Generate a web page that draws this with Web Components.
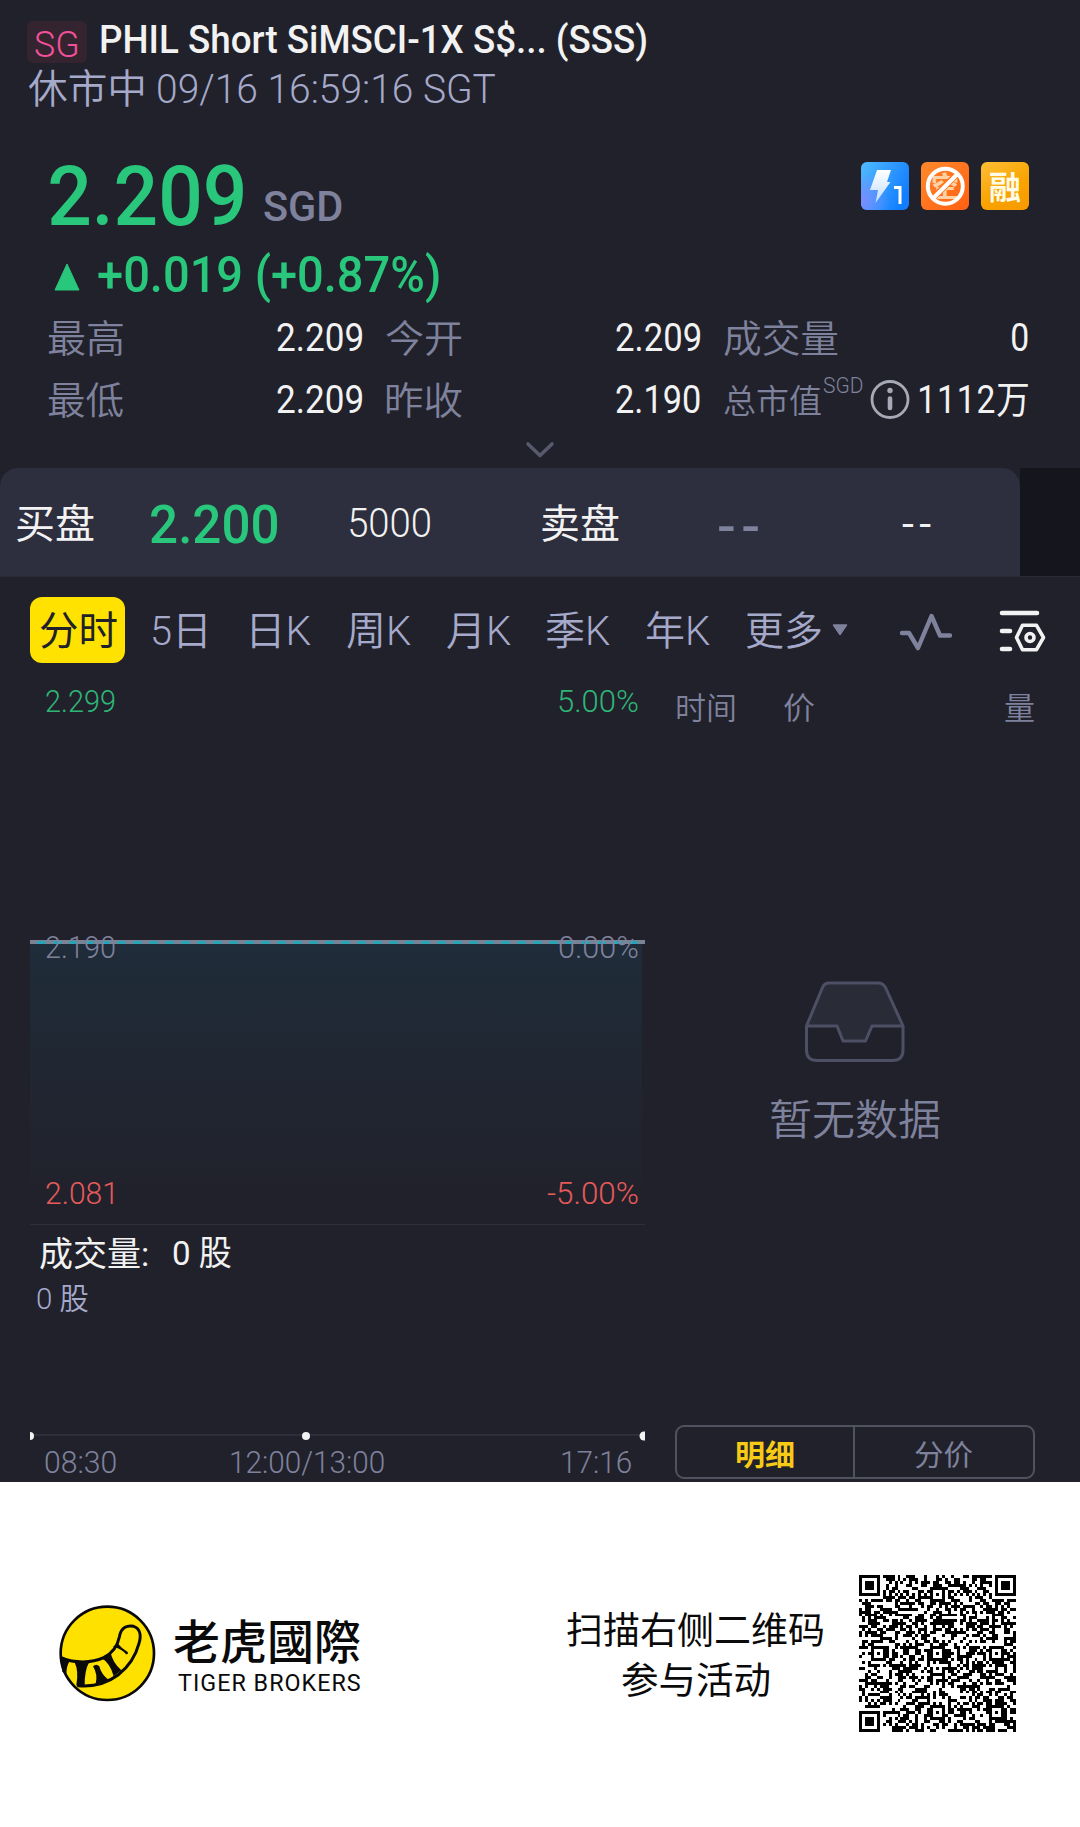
<!DOCTYPE html>
<html lang="zh-CN">
<head>
<meta charset="UTF-8">
<title>PHIL Short SiMSCI-1X S$ (SSS)</title>
<style>
  body {
    margin: 0;
    width: 1080px;
    height: 1827px;
    overflow: hidden;
    background: #21212b;
    color: #f2f2f2;
    font-family: Roboto, "Noto Sans CJK SC", sans-serif;
  }

  .market {
    display: flex;
    height: 806px;
  }
</style>
</head>
<body>
<quote-header></quote-header>
<price-board></price-board>
<order-book></order-book>
<chart-tabs></chart-tabs>
<div class="market">
  <minute-chart></minute-chart>
  <trade-list></trade-list>
</div>
<brand-footer></brand-footer>

<script>
const measure = document.createElement('canvas').getContext('2d');

// One line of text, condensed or widened so that its ink is exactly w pixels wide
class FitText extends HTMLElement {

  constructor() {
    super();
    this.shadowDOM = this.attachShadow({mode: 'open'});
  }

  connectedCallback() {
    this.render();
  }

  render() {
    const width = Number(this.getAttribute('w'));
    const size = this.getAttribute('size') || 38;
    const weight = this.getAttribute('weight') || 400;
    const gap = this.getAttribute('gap') || 0;
    const track = this.getAttribute('track') || 0;
    const dy = Number(this.getAttribute('dy') || 0) + 1.5;
    const color = this.getAttribute('color') || 'inherit';

    measure.font = `${weight} ${size}px Roboto, "Noto Sans CJK SC", sans-serif`;
    measure.letterSpacing = `${track}px`;
    const box = measure.measureText(this.textContent);
    const scale = width / (box.actualBoundingBoxLeft + box.actualBoundingBoxRight);
    const shift = box.actualBoundingBoxLeft * scale;

    this.shadowDOM.innerHTML = `
      <style>
      :host {
        display: block;
        flex: none;
        width: ${width}px;
        margin-left: ${gap}px;
        font-size: ${size}px;
        font-weight: ${weight};
        letter-spacing: ${track}px;
        line-height: 1.2;
        color: ${color};
        white-space: nowrap;
      }

      span {
        display: block;
        width: max-content;
        transform-origin: 0 50%;
        transform: translate(${shift}px, ${dy}px) scaleX(${scale});
      }
      </style>
      <span><slot></slot></span>
    `;
  }
}

class QuoteHeader extends HTMLElement {

  constructor() {
    super();
    this.shadowDOM = this.attachShadow({mode: 'open'});
  }

  connectedCallback() {
    this.shadowDOM.innerHTML = `
      <style>
      :host {
        display: block;
        height: 119px;
        padding: 21px 27px 0;
      }

      .name {
        display: flex;
        align-items: center;
        height: 42px;
      }

      .market {
        display: flex;
        align-items: center;
        box-sizing: border-box;
        width: 60px;
        height: 42px;
        padding: 4px 0 0 8px;
        border-radius: 6px;
        background: #33242f;
      }

      .title {
        margin-top: -6px;
      }

      .status {
        display: flex;
        align-items: center;
        height: 50px;
      }
      </style>
      <div class="name">
        <div class="market"><fit-text w="42" size="36" weight="300" color="#f2509a">SG</fit-text></div>
        <div class="title"><fit-text w="545" size="38" weight="500" gap="14">PHIL Short SiMSCI-1X S$... (SSS)</fit-text></div>
      </div>
      <div class="status">
        <fit-text w="115" size="40" weight="350" gap="1" color="#a5a9ca">休市中</fit-text>
        <fit-text w="337" size="40" weight="300" gap="15" color="#a5a9ca">09/16 16:59:16 SGT</fit-text>
      </div>
    `;
  }
}

class PriceBoard extends HTMLElement {

  constructor() {
    super();
    this.shadowDOM = this.attachShadow({mode: 'open'});
  }

  connectedCallback() {
    this.shadowDOM.innerHTML = `
      <style>
      :host {
        display: block;
        height: 328px;
        color: #f2f2f2;
      }

      .row {
        display: flex;
        align-items: center;
        padding: 0 51px 0 48px;
      }

      .price {
        height: 108px;
        color: #29c77c;
      }

      .unit {
        margin-top: 23px;
      }

      .tags {
        display: flex;
        gap: 12px;
        margin: -16px 0 0 auto;
      }

      .change {
        height: 58px;
        color: #29c77c;
      }

      .stat {
        height: 62px;
      }

      .sup {
        margin-top: -29px;
      }

      .info {
        margin-left: 7px;
        flex: none;
      }

      .more {
        display: flex;
        justify-content: center;
        padding-top: 11px;
      }
      </style>
      <div class="row price">
        <fit-text w="193" size="84" weight="500" gap="2" dy="1">2.209</fit-text>
        <fit-text class="unit" w="78" size="42" weight="500" gap="21" color="#7f829c">SGD</fit-text>
        <div class="tags">
          <svg width="48" height="48" viewBox="0 0 48 48">
            <defs>
              <linearGradient id="blue" x1="0" y1=".1" x2="1" y2=".6">
                <stop offset="0" stop-color="#4fb9ff"/><stop offset="1" stop-color="#127dff"/>
              </linearGradient>
              <radialGradient id="violet" cx="0" cy=".8" r=".6">
                <stop offset="0" stop-color="#7b8cff"/><stop offset="1" stop-color="#7b8cff" stop-opacity="0"/>
              </radialGradient>
              <linearGradient id="bolt" x1="0" y1="0" x2="0" y2="1">
                <stop offset="0" stop-color="#fff"/><stop offset="1" stop-color="#bfdcff"/>
              </linearGradient>
            </defs>
            <rect width="48" height="48" rx="6" fill="url(#blue)"/>
            <rect width="48" height="48" rx="6" fill="url(#violet)"/>
            <path d="M16 8H30L26 20H29.500L14.500 41L17 28H9Z" fill="url(#bolt)"/>
            <path d="M33 25.500H39V42" fill="none" stroke="#fff" stroke-width="3"/>
          </svg>
          <svg width="48" height="48" viewBox="0 0 48 48">
            <defs>
              <linearGradient id="orange" x1="0" y1="0" x2="1" y2="1">
                <stop offset="0" stop-color="#ff8a2b"/><stop offset="1" stop-color="#ff5f12"/>
              </linearGradient>
            </defs>
            <rect width="48" height="48" rx="6" fill="url(#orange)"/>
            <text x="24" y="34.500" text-anchor="middle" font-family="Noto Sans CJK SC" font-size="28" font-weight="700" fill="#ffd2a6">空</text>
            <path d="M12 36L36 12" stroke="#ff7620" stroke-width="6.500"/>
            <circle cx="24.300" cy="24.300" r="17.500" fill="none" stroke="#fff" stroke-width="4"/>
            <path d="M12 36.500L36.500 12" stroke="#fff" stroke-width="4"/>
          </svg>
          <svg width="48" height="48" viewBox="0 0 48 48">
            <defs>
              <linearGradient id="gold" x1=".2" y1="0" x2=".8" y2="1">
                <stop offset="0" stop-color="#fdbb2f"/><stop offset=".6" stop-color="#f9a300"/><stop offset="1" stop-color="#f79b00"/>
              </linearGradient>
            </defs>
            <rect width="48" height="48" rx="6" fill="url(#gold)"/>
            <text x="24" y="36.500" text-anchor="middle" font-family="Noto Sans CJK SC" font-size="32" font-weight="700" fill="#fffbe6">融</text>
          </svg>
        </div>
      </div>
      <div class="row change">
        <svg width="26" height="28" viewBox="0 0 26 28" style="margin: -1px 0 0 6px"><path d="M13 1L25 27H1Z" fill="#29c77c" stroke="#29c77c" stroke-linejoin="round"/></svg>
        <fit-text w="341" size="50" weight="500" gap="18" dy="-4">+0.019 (+0.87%)</fit-text>
      </div>
      <div class="row stat">
        <fit-text w="75" weight="350" color="#7f829c" dy="1">最高</fit-text>
        <fit-text w="85" weight="400" gap="154">2.209</fit-text>
        <fit-text w="76" weight="350" gap="24" color="#7f829c" dy="1">今开</fit-text>
        <fit-text w="84" weight="400" gap="154">2.209</fit-text>
        <fit-text w="114" weight="350" gap="24" color="#7f829c" dy="1">成交量</fit-text>
        <fit-text w="16" weight="400" gap="174">0</fit-text>
      </div>
      <div class="row stat">
        <fit-text w="75" weight="350" color="#7f829c" dy="1">最低</fit-text>
        <fit-text w="85" weight="400" gap="154">2.209</fit-text>
        <fit-text w="76" weight="350" gap="24" color="#7f829c" dy="1">昨收</fit-text>
        <fit-text w="84" weight="400" gap="154">2.190</fit-text>
        <fit-text w="97" size="33" weight="350" gap="24" color="#7f829c" dy="1">总市值</fit-text>
        <fit-text class="sup" w="40" size="22" weight="300" gap="2" color="#7f829c">SGD</fit-text>
        <svg class="info" width="40" height="40" viewBox="0 0 40 40">
          <circle cx="20" cy="20.500" r="18" fill="none" stroke="#a7a9b6" stroke-width="2.800"/>
          <circle cx="20" cy="11.500" r="2.700" fill="#a7a9b6"/>
          <path d="M20 19.500V29" stroke="#a7a9b6" stroke-width="4.600" stroke-linecap="round"/>
        </svg>
        <fit-text w="108" weight="400" gap="10" track="1">1112万</fit-text>
      </div>
      <div class="more">
        <svg width="30" height="18" viewBox="0 0 30 18"><path d="M3 3L15 14.500L27 3" fill="none" stroke="#575a6c" stroke-width="3.600" stroke-linecap="round" stroke-linejoin="round"/></svg>
      </div>
    `;
  }
}

class OrderBook extends HTMLElement {

  constructor() {
    super();
    this.shadowDOM = this.attachShadow({mode: 'open'});
  }

  connectedCallback() {
    this.shadowDOM.innerHTML = `
      <style>
      :host {
        display: flex;
        height: 108px;
        border-bottom: 1px solid #2a2b38;
      }

      .book {
        display: flex;
        align-items: center;
        box-sizing: border-box;
        width: 1020px;
        padding-left: 17px;
        border-radius: 18px 18px 0 0;
        background: #2d2e3e;
      }

      .rest {
        flex: 1;
        background: #15151d;
      }
      </style>
      <div class="book">
        <fit-text w="77" size="40" weight="400" dy="1">买盘</fit-text>
        <fit-text w="126" size="54" weight="500" gap="57" color="#29c77c" dy="1">2.200</fit-text>
        <fit-text w="80" size="40" weight="300" gap="73">5000</fit-text>
        <fit-text w="77" size="40" weight="400" gap="112" dy="1">卖盘</fit-text>
        <fit-text w="40" size="50" weight="500" gap="99" track="5" color="#7f829c" dy="3">--</fit-text>
        <fit-text w="29" size="40" weight="400" gap="144" track="5" dy="1">--</fit-text>
      </div>
      <div class="rest"></div>
    `;
  }
}

class ChartTabs extends HTMLElement {

  constructor() {
    super();
    this.shadowDOM = this.attachShadow({mode: 'open'});
  }

  connectedCallback() {
    this.shadowDOM.innerHTML = `
      <style>
      :host {
        display: flex;
        align-items: center;
        height: 66px;
        padding: 20px 0 13px 30px;
        color: #a5a9ca;
      }

      .active {
        display: flex;
        align-items: center;
        width: 95px;
        height: 66px;
        border-radius: 12px;
        background: #ffe200;
        color: #21212b;
      }

      svg {
        flex: none;
      }
      </style>
      <div class="active"><fit-text w="77" size="40" gap="10">分时</fit-text></div>
      <fit-text w="53" size="40" weight="350" gap="28">5日</fit-text>
      <fit-text w="59" size="40" weight="350" gap="46">日K</fit-text>
      <fit-text w="64" size="40" weight="350" gap="36">周K</fit-text>
      <fit-text w="64" size="40" weight="350" gap="36">月K</fit-text>
      <fit-text w="64" size="40" weight="350" gap="35">季K</fit-text>
      <fit-text w="64" size="40" weight="350" gap="36">年K</fit-text>
      <fit-text w="75" size="40" weight="350" gap="36">更多</fit-text>
      <svg width="16" height="12" viewBox="0 0 16 12" style="margin-left: 11px"><path d="M1.500 1H14.500L8 10.500Z" fill="#7f829c" stroke="#7f829c" stroke-width="1.500" stroke-linejoin="round"/></svg>
      <svg width="54" height="38" viewBox="0 0 54 38" style="margin: 4px 0 0 51px"><path d="M3 20H10L19 35L32.500 3L41 22.500H51" fill="none" stroke="#7f829c" stroke-width="4.400" stroke-linecap="round" stroke-linejoin="round"/></svg>
      <svg width="50" height="46" viewBox="0 0 50 46" style="margin: 2px 0 0 45px">
        <g fill="none" stroke="#f2f2f2" stroke-width="4.600" stroke-linecap="round" stroke-linejoin="round">
          <path d="M4 5H39M4 23H12M4 41H12"/>
          <path d="M24.500 17.300H38.500L45.500 29.500L38.500 41.700H24.500L18.500 29.500Z" stroke-width="3.600"/>
          <circle cx="32" cy="29.500" r="4" stroke-width="3.600"/>
        </g>
      </svg>
    `;
  }
}

class MinuteChart extends HTMLElement {

  constructor() {
    super();
    this.shadowDOM = this.attachShadow({mode: 'open'});
  }

  connectedCallback() {
    this.shadowDOM.innerHTML = `
      <style>
      :host {
        display: block;
        box-sizing: border-box;
        width: 645px;
        padding-left: 30px;
      }

      .plot {
        position: relative;
        display: flex;
        flex-direction: column;
        justify-content: space-between;
        box-sizing: border-box;
        height: 549px;
        padding: 5px 7px 13px 16px;
        border-bottom: 1px solid #2d2e3a;
      }

      .plot svg {
        position: absolute;
        left: 0;
        top: 264px;
      }

      .labels {
        position: relative;
        display: flex;
        align-items: center;
        justify-content: space-between;
        height: 38px;
      }

      .volume {
        display: flex;
        align-items: center;
        height: 52px;
        padding-left: 10px;
      }

      .scale {
        display: flex;
        align-items: center;
        height: 40px;
        padding-left: 7px;
      }

      .axis {
        display: block;
        margin-top: 114px;
      }

      .times {
        display: flex;
        align-items: center;
        height: 40px;
        padding-left: 15px;
      }
      </style>
      <div class="plot">
        <svg width="615" height="262" viewBox="0 0 615 262">
          <defs>
            <linearGradient id="fade" x1="0" y1="0" x2="0" y2="1">
              <stop offset="0" stop-color="#1f2c39"/><stop offset="1" stop-color="#21212b"/>
            </linearGradient>
          </defs>
          <rect y="2" width="612" height="260" fill="url(#fade)"/>
          <path d="M0 2H615" stroke="#7c8296" stroke-width="4"/>
          <path d="M7.500 2.500H608" stroke="#25a6b8" stroke-width="3" stroke-dasharray="8 8"/>
        </svg>
        <div class="labels">
          <fit-text w="69" size="31" weight="300" color="#2eb677">2.299</fit-text>
          <fit-text w="79" size="31" weight="300" color="#2eb677">5.00%</fit-text>
        </div>
        <div class="labels">
          <fit-text w="69" size="31" weight="300" color="#7f829c">2.190</fit-text>
          <fit-text w="79" size="31" weight="300" color="#7f829c">0.00%</fit-text>
        </div>
        <div class="labels">
          <fit-text w="67" size="31" weight="300" color="#e65a5a">2.081</fit-text>
          <fit-text w="91" size="31" weight="300" color="#e65a5a">-5.00%</fit-text>
        </div>
      </div>
      <div class="volume">
        <fit-text w="108" size="34" weight="400" dy="1">成交量:</fit-text>
        <fit-text w="58" size="34" weight="400" gap="25">0 股</fit-text>
      </div>
      <div class="scale">
        <fit-text w="51" size="30" weight="350" color="#a5a9ca">0 股</fit-text>
      </div>
      <svg class="axis" width="615" height="10" viewBox="0 0 615 10">
        <path d="M0 4H615" stroke="#2d2e3a" stroke-width="2"/>
        <g fill="#f2f2f2"><circle cx="0" cy="5" r="4"/><circle cx="276" cy="5" r="4"/><circle cx="614" cy="5" r="4.500"/></g>
      </svg>
      <div class="times">
        <fit-text w="71" size="31" weight="300" color="#7f829c">08:30</fit-text>
        <fit-text w="153" size="31" weight="300" gap="115" color="#7f829c">12:00/13:00</fit-text>
        <fit-text w="69" size="31" weight="300" gap="178" color="#7f829c">17:16</fit-text>
      </div>
    `;
  }
}

class TradeList extends HTMLElement {

  constructor() {
    super();
    this.shadowDOM = this.attachShadow({mode: 'open'});
  }

  connectedCallback() {
    this.shadowDOM.innerHTML = `
      <style>
      :host {
        display: flex;
        flex-direction: column;
        box-sizing: border-box;
        width: 435px;
        padding: 11px 45px 3px 30px;
        color: #7f829c;
      }

      .head {
        display: flex;
        align-items: center;
        height: 40px;
        padding-left: 2px;
      }

      .empty {
        display: flex;
        flex-direction: column;
        align-items: center;
        flex: 1;
        padding-top: 253px;
      }

      .empty fit-text {
        margin-top: 30px;
      }

      .switch {
        display: grid;
        grid-template-columns: 1fr 1fr;
        box-sizing: border-box;
        height: 54px;
        border: 2px solid #50525f;
        border-radius: 9px;
      }

      .switch div {
        display: flex;
        align-items: center;
        justify-content: center;
        padding-top: 4px;
      }

      .switch div:first-child {
        border-right: 2px solid #50525f;
      }
      </style>
      <div class="head">
        <fit-text w="58" size="31" weight="350">时间</fit-text>
        <fit-text w="30" size="31" weight="350" gap="49">价</fit-text>
        <fit-text w="29" size="31" weight="350" gap="191">量</fit-text>
      </div>
      <div class="empty">
        <svg width="102" height="84" viewBox="0 0 102 84" fill="none" stroke="#4d4f65" stroke-width="3" stroke-linejoin="round">
          <path d="M2.500 46L18.500 7.500Q20.500 3 25 3H74Q79 3 81.500 7.500L99 46H68L61.500 61H39L33 46Z" fill="#292b37"/>
          <path d="M2.500 46V70Q2.500 80.500 13 80.500H88.500Q99 80.500 99 70V46"/>
        </svg>
        <fit-text w="169" size="42" weight="350">暂无数据</fit-text>
      </div>
      <div class="switch">
        <div><fit-text w="57" size="29" weight="600" color="#f7cb15">明细</fit-text></div>
        <div><fit-text w="58" size="29" weight="400">分价</fit-text></div>
      </div>
    `;
  }
}

class QrCode extends HTMLElement {

  constructor() {
    super();
    this.shadowDOM = this.attachShadow({mode: 'open'});
  }

  connectedCallback() {
    this.render();
  }

  // square ring pattern: distance from the centre decides dark or light
  ring(x, y, cx, cy, reach) {
    const d = Math.max(Math.abs(x - cx), Math.abs(y - cy));
    if (d > reach) return null;
    return reach === 4 ? d !== 2 && d !== 4 : d !== 1;
  }

  isDark(x, y, noise) {
    for (const [cx, cy] of [[3, 3], [49, 3], [3, 49]]) {
      const finder = this.ring(x, y, cx, cy, 4);
      if (finder !== null) return finder;
    }
    for (const [cx, cy] of [[26, 6], [6, 26], [26, 26], [46, 26], [26, 46], [46, 46]]) {
      const mark = this.ring(x, y, cx, cy, 2);
      if (mark !== null) return mark;
    }
    if (x === 6 || y === 6) return (x + y) % 2 === 0;
    return noise;
  }

  render() {
    let seed = 20916;
    let path = '';
    for (let y = 0; y < 53; y++) {
      for (let x = 0; x < 53; x++) {
        seed = (Math.imul(seed, 1664525) + 1013904223) >>> 0;
        if (this.isDark(x, y, (seed >>> 16) % 100 < 50)) path += `M${x} ${y}h1v1h-1z`;
      }
    }
    this.shadowDOM.innerHTML = `
      <style>
      :host {
        display: block;
        width: 157px;
        height: 157px;
      }
      </style>
      <svg width="157" height="157" viewBox="0 0 53 53" shape-rendering="crispEdges"><path d="${path}"/></svg>
    `;
  }
}

class BrandFooter extends HTMLElement {

  constructor() {
    super();
    this.shadowDOM = this.attachShadow({mode: 'open'});
  }

  connectedCallback() {
    this.shadowDOM.innerHTML = `
      <style>
      :host {
        display: flex;
        align-items: center;
        box-sizing: border-box;
        height: 345px;
        padding: 0 64px 2px 59px;
        background: #fff;
        color: #0a0a0a;
      }

      .brand {
        margin-left: 18px;
      }

      .tip {
        display: flex;
        flex-direction: column;
        align-items: center;
        gap: 5px;
        margin: 3px 36px 0 auto;
      }
      </style>
      <svg width="97" height="97" viewBox="58 78 291 291">
        <circle cx="203" cy="223" r="140" fill="#ffe100" stroke="#0a0a0a" stroke-width="8"/>
        <g fill="none" stroke="#0a0a0a" stroke-width="9" stroke-linecap="round" stroke-linejoin="round">
          <path d="M66 237C105 253 155 253 192 236C219 222 234 200 239 174C244 143 265 138 282 142C302 149 305 170 298 193C288 231 266 264 235 288C204 311 165 324 116 320"/>
        </g>
        <g fill="#0a0a0a">
          <path d="M62 230L90 246Q80 262 80 286L68 278Z"/>
          <path d="M104 248H149Q134 275 135 321L110 319Q118 275 104 248Z"/>
          <path d="M160 262Q170 252 179 262Q184 285 207 303L168 316Q175 285 160 262Z"/>
          <path d="M184 236L213 221Q219 250 245 274L222 292Q212 252 184 236Z"/>
          <path d="M220 203L235 194Q245 207 264 219Q267 226 259 226Q247 209 220 203Z"/>
        </g>
      </svg>
      <div class="brand">
        <fit-text w="186" size="47" weight="500" dy="1">老虎國際</fit-text>
        <fit-text w="182" size="23" weight="400" gap="4" track="1">TIGER BROKERS</fit-text>
      </div>
      <div class="tip">
        <fit-text w="256" size="37" weight="400">扫描右侧二维码</fit-text>
        <fit-text w="147" size="37" weight="400">参与活动</fit-text>
      </div>
      <qr-code></qr-code>
    `;
  }
}

customElements.define('fit-text', FitText);
customElements.define('qr-code', QrCode);
customElements.define('quote-header', QuoteHeader);
customElements.define('price-board', PriceBoard);
customElements.define('order-book', OrderBook);
customElements.define('chart-tabs', ChartTabs);
customElements.define('minute-chart', MinuteChart);
customElements.define('trade-list', TradeList);
customElements.define('brand-footer', BrandFooter);
</script>
</body>
</html>
